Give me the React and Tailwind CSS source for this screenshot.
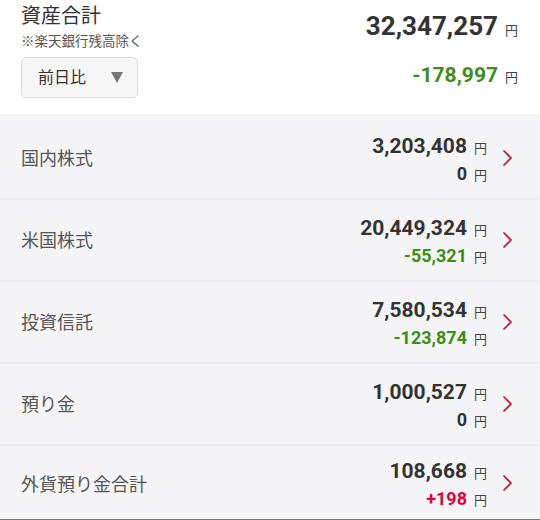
const rows = [
  { label: '国内株式', value: '3,203,408', diff: '0', tone: 'zero' },
  { label: '米国株式', value: '20,449,324', diff: '-55,321', tone: 'down' },
  { label: '投資信託', value: '7,580,534', diff: '-123,874', tone: 'down' },
  { label: '預り金', value: '1,000,527', diff: '0', tone: 'zero' },
  { label: '外貨預り金合計', value: '108,668', diff: '+198', tone: 'up' },
]

const TONE = {
  zero: 'text-[#333]',
  down: 'text-[#3a8f14]',
  up: 'text-[#e3003c]',
}

const font = { fontFamily: 'Roboto, "Noto Sans CJK JP", sans-serif' }

function Chevron() {
  return (
    <svg width="11" height="18" viewBox="0 0 11 18" className="shrink-0">
      <path d="M1.5 1.5 L9 9 L1.5 16.5" fill="none" stroke="#c8102e" strokeWidth="1.6" />
    </svg>
  )
}

export default function App() {
  return (
    <div className="w-[540px] h-[520px] overflow-hidden bg-[#f5f5f7]" style={font}>
      {/* header */}
      <div className="h-[114px] bg-white flex justify-between pl-[21px] pr-[22px]">
        <div className="pt-[3px]">
          <div className="text-[20px] leading-[26px] text-[#333]">資産合計</div>
          <div className="text-[13.5px] leading-[16px] text-[#555] mt-[4px]">※楽天銀行残高除く</div>
          <div className="mt-[8px] w-[117px] h-[41px] border border-[#dcdcdc] rounded-[5px] bg-[#f6f6f6] flex items-center pl-[16px] pr-[14px] justify-between">
            <span className="text-[16px] text-[#333]">前日比</span>
            <svg width="12" height="11" viewBox="0 0 12 11"><path d="M0 0 H12 L6 11 Z" fill="#777" /></svg>
          </div>
        </div>
        <div className="flex flex-col items-end pt-[10px]">
          <div className="flex items-baseline">
            <span className="text-[26px] leading-[32px] font-bold text-[#333]">32,347,257</span>
            <span className="text-[13px] text-[#444] ml-[7px]">円</span>
          </div>
          <div className="flex items-baseline mt-[21px]">
            <span className="text-[21px] leading-[25px] font-bold text-[#3a8f14]">-178,997</span>
            <span className="text-[13px] text-[#444] ml-[7px]">円</span>
          </div>
        </div>
      </div>

      {/* asset rows */}
      <div className="pt-[4px]">
        {rows.map((r, i) => {
          const last = i === rows.length - 1
          return (
            <div key={r.label}
              className={`flex items-center pl-[21px] pr-[27px] ${last ? 'h-[74px] border-b border-[#777]' : 'h-[82px] border-b-2 border-[#ececee]'}`}>
              <span className={`flex-1 text-[18px] text-[#555] ${last ? 'pt-[4px]' : ''}`}>{r.label}</span>
              <div className={`flex flex-col items-end mr-[15px] ${last ? 'pt-[4px]' : 'pt-[3px]'}`}>
                <div className="flex items-baseline">
                  <span className="text-[21px] leading-[24px] font-bold text-[#333]">{r.value}</span>
                  <span className="text-[13px] text-[#444] ml-[7px]">円</span>
                </div>
                <div className="flex items-baseline mt-[5px]">
                  <span className={`text-[18px] leading-[22px] font-bold ${TONE[r.tone]}`}>{r.diff}</span>
                  <span className="text-[13px] text-[#444] ml-[7px]">円</span>
                </div>
              </div>
              <Chevron />
            </div>
          )
        })}
      </div>
    </div>
  )
}
